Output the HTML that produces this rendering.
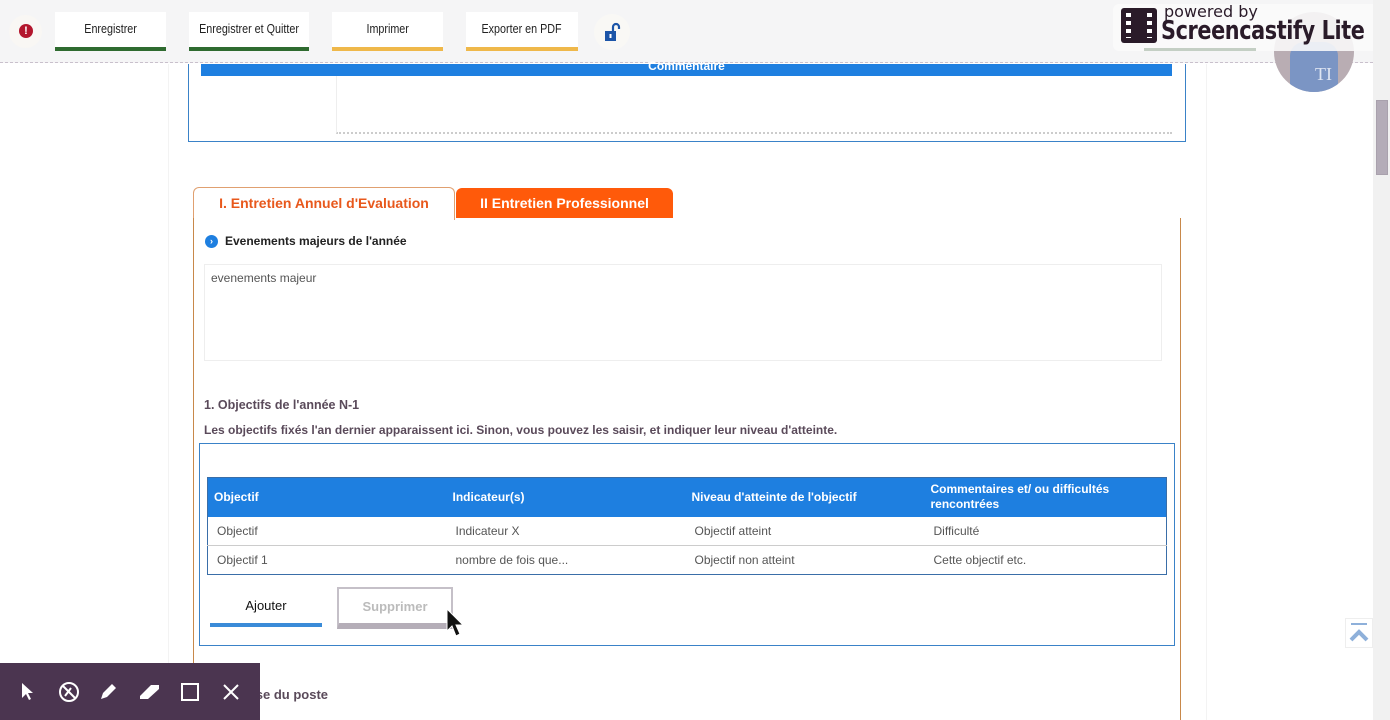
<!DOCTYPE html>
<html><head><meta charset="utf-8"><style>
*{margin:0;padding:0;box-sizing:border-box}
body{width:1390px;height:720px;overflow:hidden;background:#fff;font-family:"Liberation Sans",Arial,sans-serif;position:relative}
.a{position:absolute}
.btn{position:absolute;top:12px;height:39px;background:#fff;font-size:12.5px;color:#222;text-align:center;line-height:34px;white-space:nowrap}
.btn span{display:inline-block;transform:scaleX(0.86)}
.btn i{position:absolute;left:0;right:0;bottom:0;height:4px}
.g i{background:#2f6b30}.y i{background:#efb84a}
td{font-size:12px;color:#555;padding-left:9px}
th{font-size:12px;color:#fff;text-align:left;padding-left:6px;font-weight:bold;line-height:15px}
</style></head><body>
<div class="a" style="left:0;top:0;width:1373px;height:63px;background:#f5f5f6;border-bottom:1px dashed #c9c0cc"></div>
<div class="a" style="left:9px;top:15px;width:33px;height:33px;border-radius:50%;background:#f9f7f4"></div>
<div class="a" style="left:19px;top:24px;width:14px;height:14px;border-radius:50%;background:#b3162d;color:#fff;font-size:11px;font-weight:bold;text-align:center;line-height:14px">!</div>
<div class="btn g" style="left:55px;width:111px"><span>Enregistrer</span><i></i></div>
<div class="btn g" style="left:189px;width:120px"><span>Enregistrer et Quitter</span><i></i></div>
<div class="btn y" style="left:332px;width:111px"><span>Imprimer</span><i></i></div>
<div class="btn y" style="left:466px;width:112px"><span>Exporter en PDF</span><i></i></div>
<div class="a" style="left:594px;top:14px;width:36px;height:36px;border-radius:50%;background:#f9f8f5"></div>
<svg class="a" style="left:603px;top:21px" width="20" height="22" viewBox="0 0 20 22"><path d="M10 10V6a3 3 0 0 1 6 0v2" fill="none" stroke="#1c55a8" stroke-width="2.2"/><rect x="2" y="10" width="11" height="10" fill="#1c55a8"/><rect x="6.5" y="13" width="2" height="4" fill="#fff"/></svg>
<!-- avatar -->
<div class="a" style="left:1274px;top:12px;width:80px;height:80px;border-radius:50%;background:#b9adb3;overflow:hidden"><div class="a" style="left:16px;top:30px;width:48px;height:55px;background:#7b95c4;border-radius:14px 14px 0 0"></div><div class="a" style="left:41px;top:52px;color:#dfe5f2;font-size:18px;font-family:'Liberation Serif',serif">TI</div></div>
<!-- screencastify -->
<div class="a" style="left:1113px;top:4px;width:272px;height:47px;background:rgba(250,250,250,0.88);border-radius:6px"></div>
<div class="a" style="left:1121px;top:8px;width:36px;height:35px;background:#2a1b29;border-radius:3px"></div>
<div class="a" style="left:1126px;top:13px;width:5px;height:25px;background:repeating-linear-gradient(#fff 0 4px,#2a1b29 4px 8px)"></div>
<div class="a" style="left:1147px;top:13px;width:5px;height:25px;background:repeating-linear-gradient(#fff 0 4px,#2a1b29 4px 8px)"></div>
<div class="a" style="left:1164px;top:2px;font-size:16px;color:#2a1b29;font-family:'DejaVu Sans',sans-serif;white-space:nowrap">powered by</div>
<div class="a" style="left:1161px;top:16px;font-size:26px;font-weight:bold;color:#2a1b29;font-family:'DejaVu Sans',sans-serif;letter-spacing:-0.5px;white-space:nowrap;transform:scaleX(0.8);transform-origin:0 0">Screencastify Lite</div>
<div class="a" style="left:1144px;top:48px;width:112px;height:3px;background:#c4cfc4"></div>
<!-- page sides -->
<div class="a" style="left:168px;top:64px;width:1px;height:656px;background:#f3f3f3"></div>
<div class="a" style="left:1206px;top:64px;width:1px;height:656px;background:#f3f3f3"></div>
<!-- scrollbar -->
<div class="a" style="left:1373px;top:0;width:17px;height:720px;background:#f1f1f1"></div>
<div class="a" style="left:1376px;top:100px;width:12px;height:75px;background:#b4acb8;border:1px solid #a9a1ad"></div>
<div class="a" style="left:1345px;top:618px;width:28px;height:30px;background:#fff;border:1px solid #eee"></div>
<svg class="a" style="left:1345px;top:618px" width="28" height="30" viewBox="0 0 28 30"><path d="M6 6h16" stroke="#8eb0da" stroke-width="2"/><path d="M6 22l8-8 8 8" fill="none" stroke="#8eb0da" stroke-width="4"/></svg>
<!-- comment box -->
<div class="a" style="left:188px;top:64px;width:998px;height:78px;border:1px solid #3a82c8;border-top:none"></div>
<div class="a" style="left:201px;top:64px;width:971px;height:12px;background:#1e7fe0;color:#fff;font-size:12px;font-weight:bold;text-align:center;line-height:4px">Commentaire</div>
<div class="a" style="left:336px;top:76px;width:836px;height:58px;border-left:1px solid #eee;border-bottom:2px dotted #ccc"></div>
<!-- tabs -->
<div class="a" style="left:193px;top:187px;width:262px;height:33px;border:1px solid #e0a070;border-bottom:none;border-radius:6px 6px 0 0;background:#fff;color:#e8581c;font-size:14px;font-weight:bold;text-align:center;line-height:31px">I. Entretien Annuel d'Evaluation</div>
<div class="a" style="left:456px;top:188px;width:217px;height:30px;background:#ff5a0a;border-radius:6px 6px 0 0;color:#fff;font-size:14px;font-weight:bold;text-align:center;line-height:30px">II Entretien Professionnel</div>
<div class="a" style="left:193px;top:218px;width:1px;height:502px;background:#c8884a"></div>
<div class="a" style="left:1180px;top:218px;width:1px;height:502px;background:#c8884a"></div>
<div class="a" style="left:205px;top:235px;width:13px;height:13px;border-radius:50%;background:#1e7fe0;color:#fff;font-size:9px;text-align:center;line-height:13px;font-weight:bold">›</div>
<div class="a" style="left:225px;top:234px;font-size:12px;font-weight:bold;color:#222">Evenements majeurs de l'année</div>
<div class="a" style="left:204px;top:264px;width:958px;height:97px;border:1px solid #eee;font-size:12px;color:#555;padding:6px 6px">evenements majeur</div>
<div class="a" style="left:204px;top:398px;font-size:12.5px;font-weight:bold;color:#5a4a5a">1. Objectifs de l'année N-1</div>
<div class="a" style="left:204px;top:423px;font-size:12px;font-weight:bold;color:#5a4a5a">Les objectifs fixés l'an dernier apparaissent ici. Sinon, vous pouvez les saisir, et indiquer leur niveau d'atteinte.</div>
<div class="a" style="left:199px;top:443px;width:976px;height:203px;border:1px solid #3a82c8"></div>
<table class="a" style="left:207px;top:477px;width:960px;border-collapse:collapse;border:1px solid #3a6ea8">
<tr style="background:#1e7fe0;height:39px"><th style="width:239px">Objectif</th><th style="width:239px">Indicateur(s)</th><th style="width:239px">Niveau d'atteinte de l'objectif</th><th>Commentaires et/ ou difficultés<br>rencontrées</th></tr>
<tr style="height:29px;border-bottom:1px solid #ccc"><td>Objectif</td><td>Indicateur X</td><td>Objectif atteint</td><td>Difficulté</td></tr>
<tr style="height:29px"><td>Objectif 1</td><td>nombre de fois que...</td><td>Objectif non atteint</td><td>Cette objectif etc.</td></tr>
</table>
<div class="a" style="left:210px;top:598px;width:112px;height:29px;border-bottom:4px solid #3a8bd8;font-size:13px;color:#111;text-align:center">Ajouter</div>
<div class="a" style="left:337px;top:587px;width:116px;height:42px;border:2px solid #c5c0c8;border-bottom:6px solid #b5aeb8;font-size:13px;font-weight:bold;color:#bbb;text-align:center;line-height:36px">Supprimer</div>
<svg class="a" style="left:445px;top:607px" width="22" height="34" viewBox="0 0 22 34"><path d="M2 2 L2 24 L7 19 L11 29 L15 27 L11 18 L18 18 Z" fill="#111" stroke="#fff" stroke-width="1"/></svg>
<div class="a" style="left:208px;top:687px;width:120px;text-align:right;font-size:13px;font-weight:bold;color:#5a4a5a">Analyse du poste</div>
<!-- toolbar -->
<div class="a" style="left:0;top:663px;width:260px;height:57px;background:#4b3550"></div>
<svg class="a" style="left:0;top:663px" width="260" height="57" viewBox="0 0 260 57"><g fill="none" stroke="#fff" stroke-width="2"><circle cx="69" cy="29" r="9"/><path d="M63 23l12 12M65 33l6-8"/><rect x="182" y="21" width="16" height="16"/><path d="M224 22l14 14M238 22l-14 14"/></g><g fill="#fff"><path d="M22 20l0 15 4-4 3 6 2-1-3-6 5 0z"/><path d="M101 36l2-6 9-9 4 4-9 9z"/><path d="M140 33l11-11h8v4l-11 10h-8z"/></g></svg>
</body></html>
